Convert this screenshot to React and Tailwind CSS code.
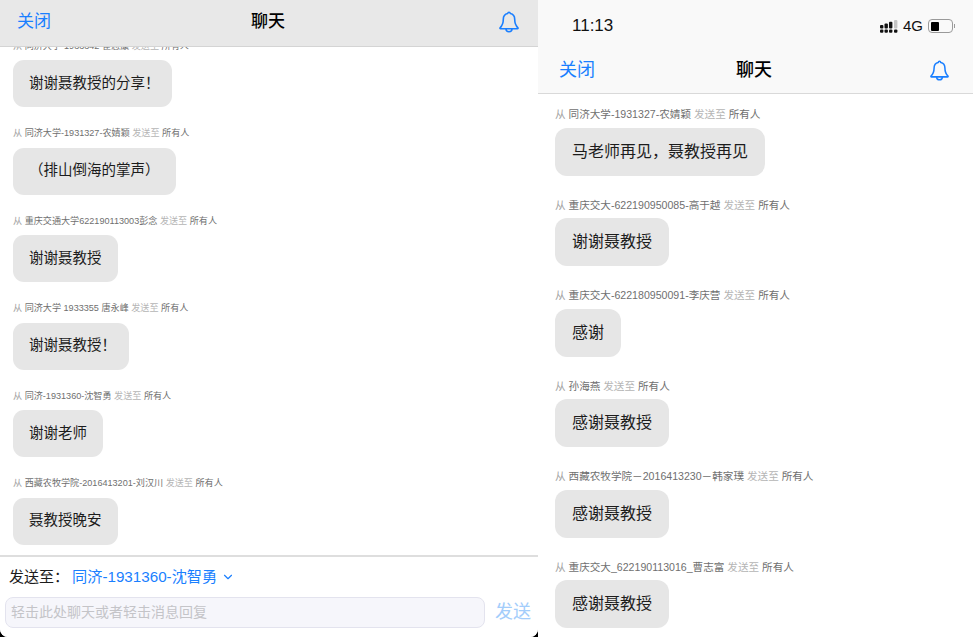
import React from 'react';
import { ChevronDown } from 'lucide-react';

const fontStack = { fontFamily: '"Liberation Sans", "Noto Sans CJK SC", sans-serif' };

// fullwidth punctuation is written as escapes so it stays fullwidth
const leftMessages = [
  { from: '同济大学-1933342 崔志康', text: '谢谢聂教授的分享', bang: true },
  { from: '同济大学-1931327-农婧颖', text: '\uFF08排山倒海的掌声\uFF09' },
  { from: '重庆交通大学622190113003彭念', text: '谢谢聂教授' },
  { from: '同济大学 1933355 唐永峰', text: '谢谢聂教授', bang: true },
  { from: '同济-1931360-沈智勇', text: '谢谢老师' },
  { from: '西藏农牧学院-2016413201-刘汉川', text: '聂教授晚安' },
];

const rightMessages = [
  { from: '同济大学-1931327-农婧颖', text: '马老师再见\uFF0C聂教授再见' },
  { from: '重庆交大-622190950085-高于越', text: '谢谢聂教授' },
  { from: '重庆交大-622180950091-李庆营', text: '感谢' },
  { from: '孙海燕', text: '感谢聂教授' },
  { from: '西藏农牧学院\uFF0D2016413230\uFF0D韩家璞', text: '感谢聂教授' },
  { from: '重庆交大_622190113016_曹志富', text: '感谢聂教授' },
];

const BellIcon = ({ className }) => (
  <svg className={className} viewBox="0 0 20 22" fill="none" stroke="#1a7fff" strokeWidth="1.6" strokeLinejoin="round" strokeLinecap="round">
    <path d="M10 1.2c.8 0 1.2.5 1.3 1.3 2.9.6 4.4 2.9 4.4 5.8 0 3.6.9 6.3 3.2 8.5.3.4.1.9-.4.9H1.5c-.5 0-.7-.5-.4-.9 2.3-2.2 3.2-4.9 3.2-8.5 0-2.9 1.5-5.2 4.4-5.8.1-.8.5-1.3 1.3-1.3z" />
    <path d="M7 17.8c0 1.9 1.3 3 3 3s3-1.1 3-3" />
  </svg>
);

const SignalIcon = () => (
  <svg width="18" height="13" viewBox="0 0 18 13" fill="#111">
    <rect x="0" y="5" width="3.4" height="3.4" rx="1" />
    <rect x="0" y="9.4" width="3.4" height="3.4" rx="1" />
    <rect x="4.5" y="3.5" width="3.4" height="4.9" rx="1" />
    <rect x="4.5" y="9.4" width="3.4" height="3.4" rx="1" />
    <rect x="9" y="1.8" width="3.4" height="6.6" rx="1" />
    <rect x="9" y="9.4" width="3.4" height="3.4" rx="1" />
    <rect x="14" y="0" width="3.4" height="8.4" rx="1" fill="#c4c4c4" />
    <rect x="14" y="9.4" width="3.4" height="3.4" rx="1" />
  </svg>
);

const BatteryIcon = () => (
  <div className="flex items-center">
    <div className="flex h-[14px] w-[25px] items-center rounded-[4px] border border-[#9a9a9a] px-[2px]">
      <div className="h-[9px] w-[8px] rounded-[1px] bg-black" />
    </div>
    <div className="ml-[1px] h-[4px] w-[1px] bg-[#9a9a9a]" />
  </div>
);

const Message = ({ from, text, bang, meta, bubble }) => (
  <div className="flex flex-col items-start">
    <p className={meta}>
      <span className="text-[#a3a3a3]">从 </span>
      <span className="text-[#6f6f6f]">{from}</span>
      <span className="text-[#b5b5b5]"> 发送至 </span>
      <span className="text-[#6f6f6f]">所有人</span>
    </p>
    <div className={bubble}>
      {text}
      {bang && <span className="-mr-[3.5px]">{'\uFF01'}</span>}
    </div>
  </div>
);

export default function App() {
  return (
    <div className="flex h-[637px] w-[973px] overflow-hidden bg-white" style={fontStack}>
      {/* Left phone shot */}
      <div className="h-full w-[538px] shrink-0 bg-black">
        <div className="flex h-full flex-col overflow-hidden rounded-b-[8px] bg-white">
          <header className="z-10 grid h-[47px] shrink-0 grid-cols-[1fr_auto_1fr] items-center border-b border-[#d4d4d4] bg-[#e8e8e8] pb-[2px] pl-[17px] pr-[19px]">
            <span className="text-[17px] text-[#1a7fff]">关闭</span>
            <span className="text-[17px] font-medium text-black">聊天</span>
            <BellIcon className="h-[22px] w-[20px] justify-self-end" />
          </header>
          <div className="flex-1 overflow-hidden">
            <div className="-mt-[8.5px] flex flex-col gap-[19px] pl-[13px]">
              {leftMessages.map((m, i) => (
                <Message
                  key={i}
                  {...m}
                  meta="h-[21.5px] text-[9.1px] leading-[14px]"
                  bubble="flex h-[47px] items-center rounded-[11px] bg-[#e6e6e6] px-[16px] text-[14.5px] text-[#1c1c1c]"
                />
              ))}
            </div>
          </div>
          <footer className="h-[82px] shrink-0 border-t-2 border-[#dedede] bg-white">
            <div className="flex h-[40px] items-center pl-[9px] text-[15px]">
              <span className="text-[#1c1c1c]">发送至{'\uFF1A'}</span>
              <span className="ml-[3px] text-[15.2px] text-[#1a7fff]">同济-1931360-沈智勇</span>
              <ChevronDown className="ml-[4px] h-[14px] w-[14px] text-[#1a7fff]" />
            </div>
            <div className="flex items-center pl-[5px]">
              <div className="flex h-[31px] w-[480px] items-center rounded-[8px] border border-[#e3e3ee] bg-[#f6f6fb] pl-[5px] text-[14px] text-[#c4c4c8]">
                轻击此处聊天或者轻击消息回复
              </div>
              <span className="ml-[10px] text-[18px] text-[#a3cdfb]">发送</span>
            </div>
          </footer>
        </div>
      </div>

      {/* Right phone shot */}
      <div className="flex h-full flex-1 flex-col">
        <div className="flex h-[47px] shrink-0 items-center justify-between bg-[#f9f9f9] pl-[34px] pr-[18px] pt-[5px]">
          <span className="text-[17px] font-medium text-[#111]">11:13</span>
          <div className="flex items-center gap-[5px]">
            <SignalIcon />
            <span className="text-[15px] text-[#111]">4G</span>
            <BatteryIcon />
          </div>
        </div>
        <header className="grid h-[47px] shrink-0 grid-cols-[1fr_auto_1fr] items-center border-b border-[#d9d9d9] bg-[#f9f9f9] pl-[21px] pr-[24px]">
          <span className="text-[18px] text-[#1a7fff]">关闭</span>
          <span className="text-[18px] font-medium text-black">聊天</span>
          <BellIcon className="h-[21px] w-[19px] justify-self-end" />
        </header>
        <div className="flex-1 overflow-hidden pt-[12px]">
          <div className="flex flex-col gap-[21px] pl-[17px]">
            {rightMessages.map((m, i) => (
              <Message
                key={i}
                {...m}
                meta="h-[21.5px] text-[10.6px] leading-[16px]"
                bubble="flex h-[48px] items-center rounded-[12px] bg-[#e6e6e6] px-[17px] text-[16px] text-[#1c1c1c]"
              />
            ))}
          </div>
        </div>
      </div>
    </div>
  );
}
